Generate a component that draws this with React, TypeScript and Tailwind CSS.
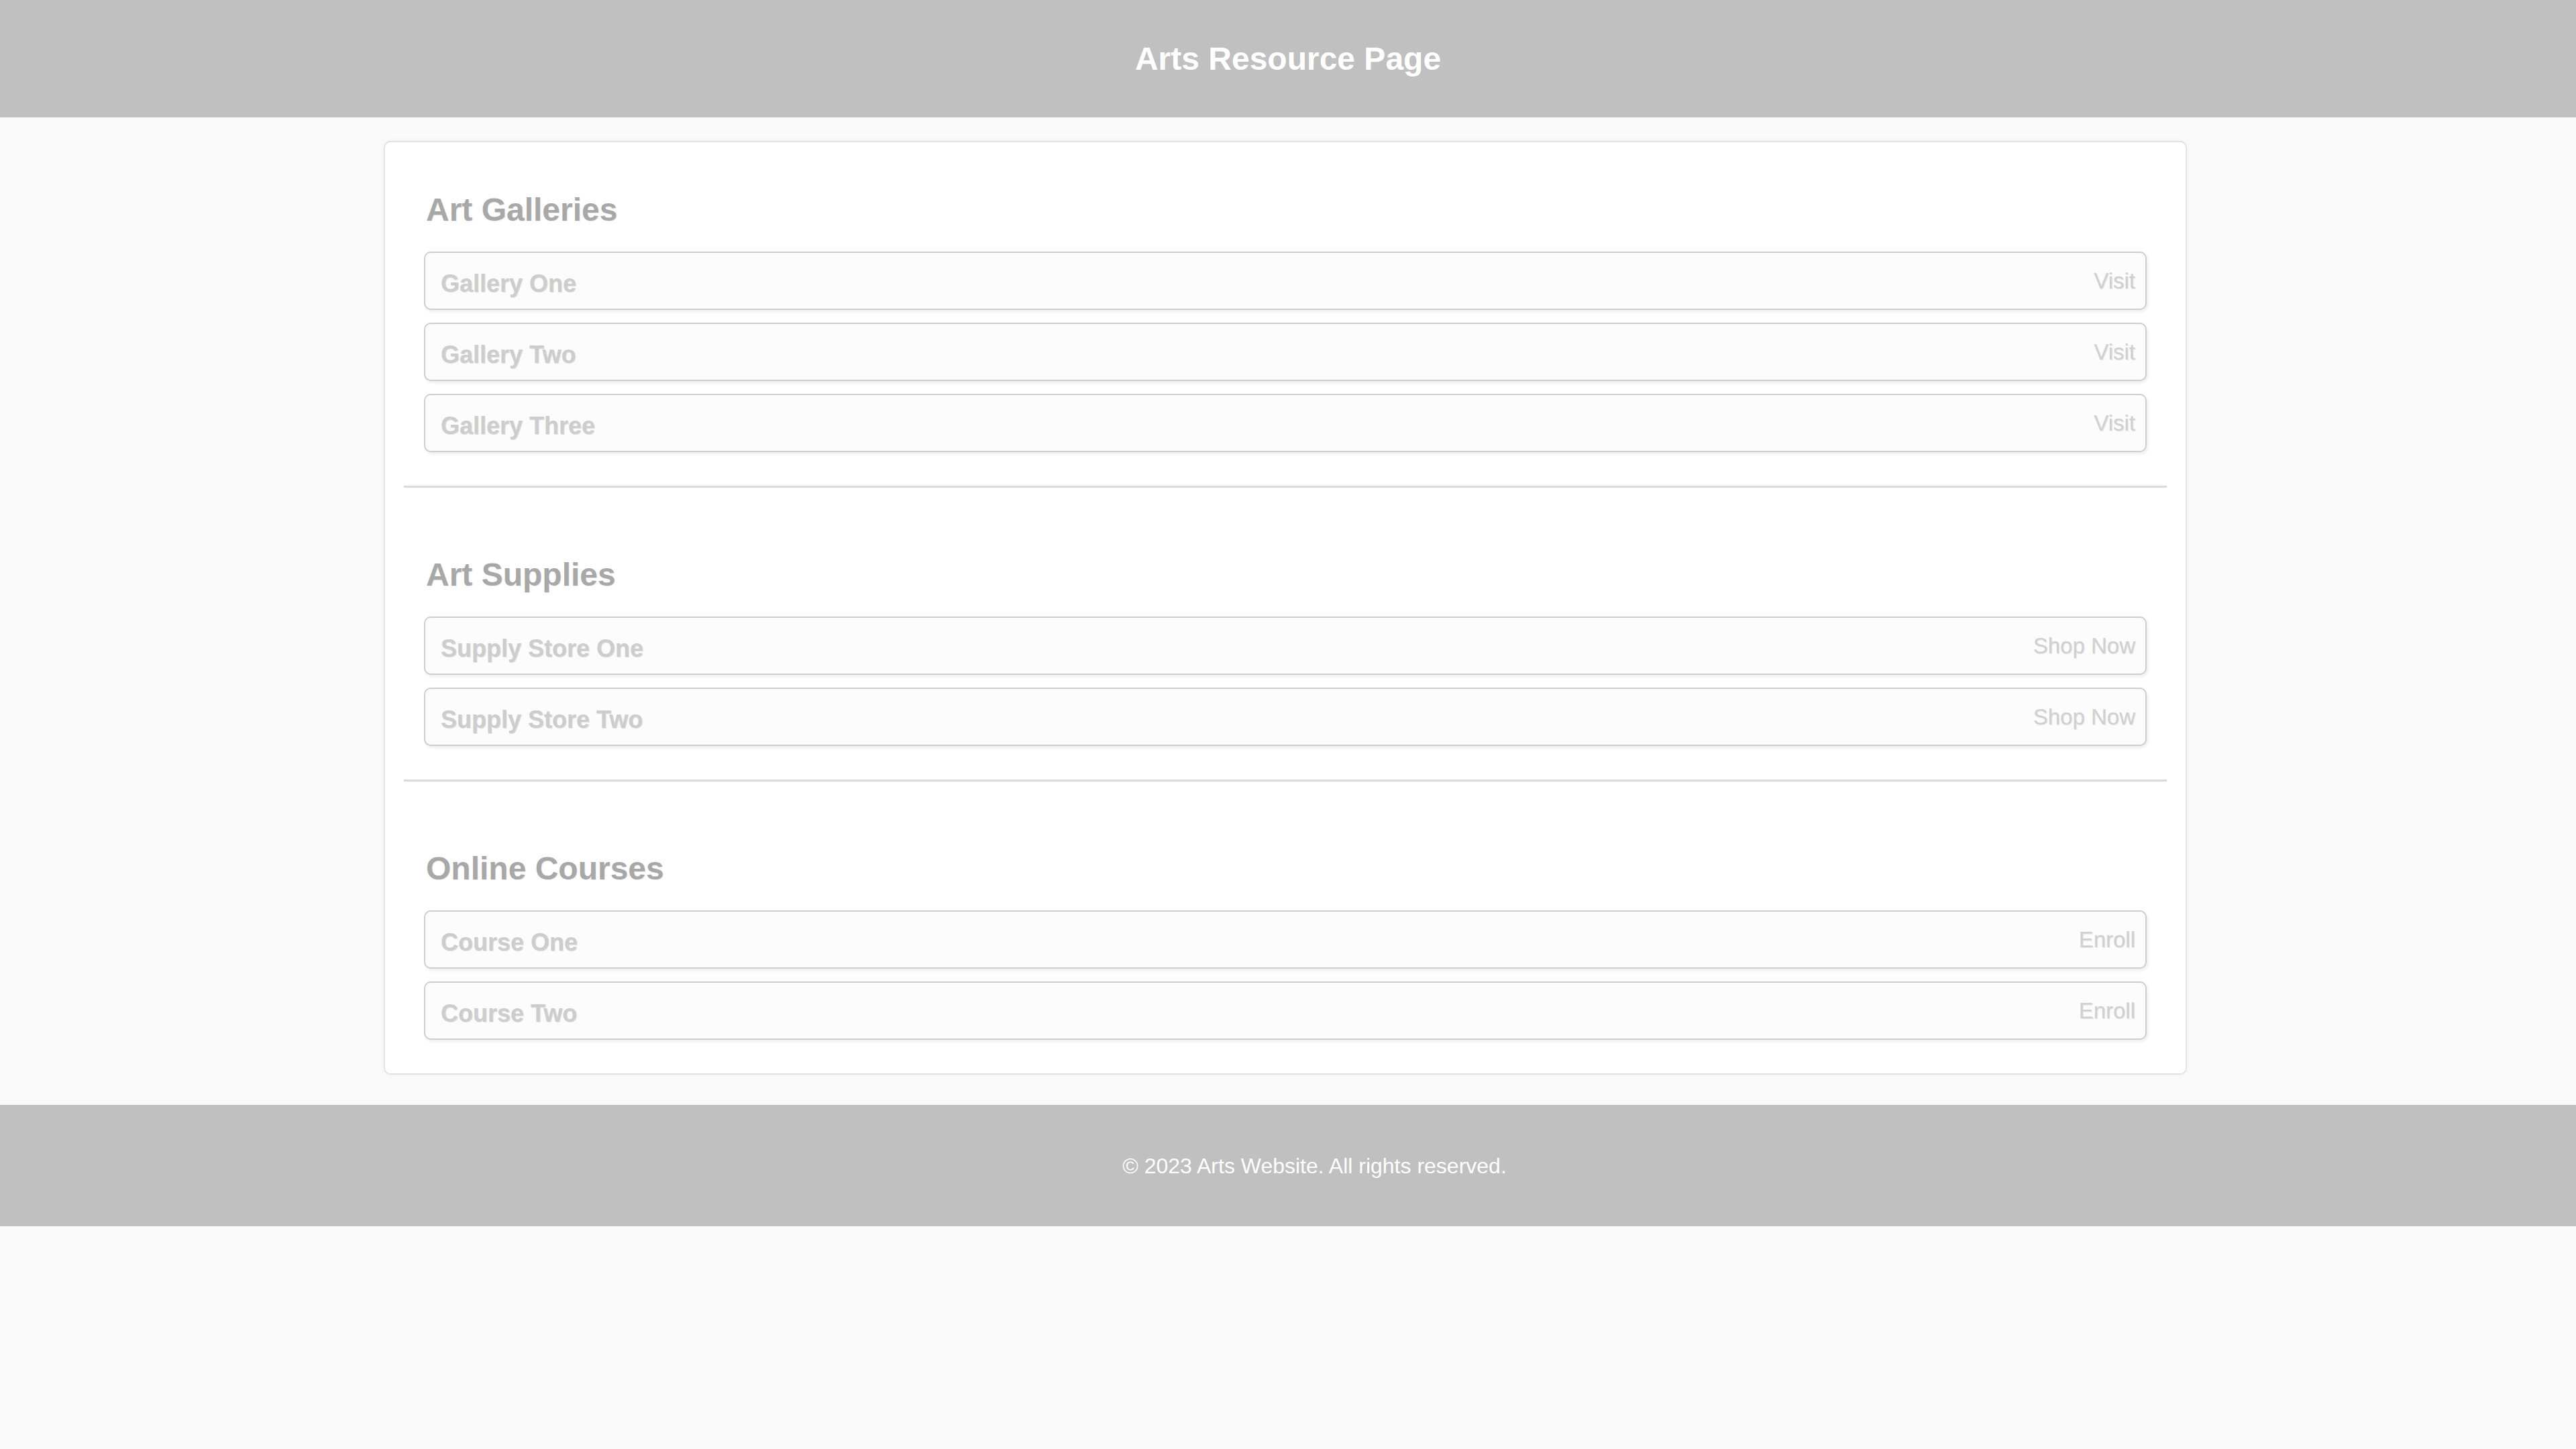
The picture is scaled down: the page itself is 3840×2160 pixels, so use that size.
import React from "react";

type Item = { name: string; action: string };
type Section = { title: string; items: Item[] };

const sections: Section[] = [
  {
    title: "Art Galleries",
    items: [
      { name: "Gallery One", action: "Visit" },
      { name: "Gallery Two", action: "Visit" },
      { name: "Gallery Three", action: "Visit" },
    ],
  },
  {
    title: "Art Supplies",
    items: [
      { name: "Supply Store One", action: "Shop Now" },
      { name: "Supply Store Two", action: "Shop Now" },
    ],
  },
  {
    title: "Online Courses",
    items: [
      { name: "Course One", action: "Enroll" },
      { name: "Course Two", action: "Enroll" },
    ],
  },
];

export default function App() {
  return (
    <div
      className="min-h-[2160px] w-full bg-[#fafafa]"
      style={{ fontFamily: '"Liberation Sans", Arial, Helvetica, sans-serif' }}
    >
      <header className="flex h-[175px] items-center justify-center bg-[#c0c0c0]">
        <h1 className="text-[48px] font-bold leading-[56px] text-white">Arts Resource Page</h1>
      </header>

      <main className="ml-[572px] mt-[35px] w-[2688px] rounded-[10px] border-2 border-[#e2e2e2] bg-white px-[28px] pt-[30px] shadow-[0_0_10px_rgba(0,0,0,0.04)]">
        {sections.map((s, i) => {
          const last = i === sections.length - 1;
          return (
            <section
              key={s.title}
              className={
                last
                  ? "px-[30px] pt-[43px] pb-[50px]"
                  : "mb-[59px] border-b-[3px] border-[#dadada] px-[30px] pt-[43px] pb-[50px] shadow-[0_2px_2px_-1px_rgba(0,0,0,0.03)]"
              }
            >
              <h2 className="mb-[34px] pl-[3px] text-[48px] font-bold leading-[56px] text-[#a8a8a8] [text-shadow:1px_1px_1px_rgba(0,0,0,0.08)]">
                {s.title}
              </h2>
              <div className="flex flex-col gap-[19px]">
                {s.items.map((it) => (
                  <div
                    key={it.name}
                    className="flex h-[87px] items-center justify-between rounded-[10px] border-2 border-[#cecece] bg-[#fcfcfc] pl-[23px] pr-[15px] shadow-[2px_3px_4px_rgba(0,0,0,0.07)]"
                  >
                    <span className="pt-[8px] text-[36px] font-bold leading-[42px] text-[#cdcdcd] [text-shadow:1px_1px_1px_rgba(0,0,0,0.12)]">
                      {it.name}
                    </span>
                    <span className="text-[33px] leading-[40px] text-[#d0d0d0] [text-shadow:1px_1px_1px_rgba(0,0,0,0.1)]">
                      {it.action}
                    </span>
                  </div>
                ))}
              </div>
            </section>
          );
        })}
      </main>

      <footer className="mt-[45px] flex h-[181px] items-center justify-center bg-[#c0c0c0] pl-[79px]">
        <p className="text-[32px] leading-[40px] text-white">© 2023 Arts Website. All rights reserved.</p>
      </footer>
    </div>
  );
}
